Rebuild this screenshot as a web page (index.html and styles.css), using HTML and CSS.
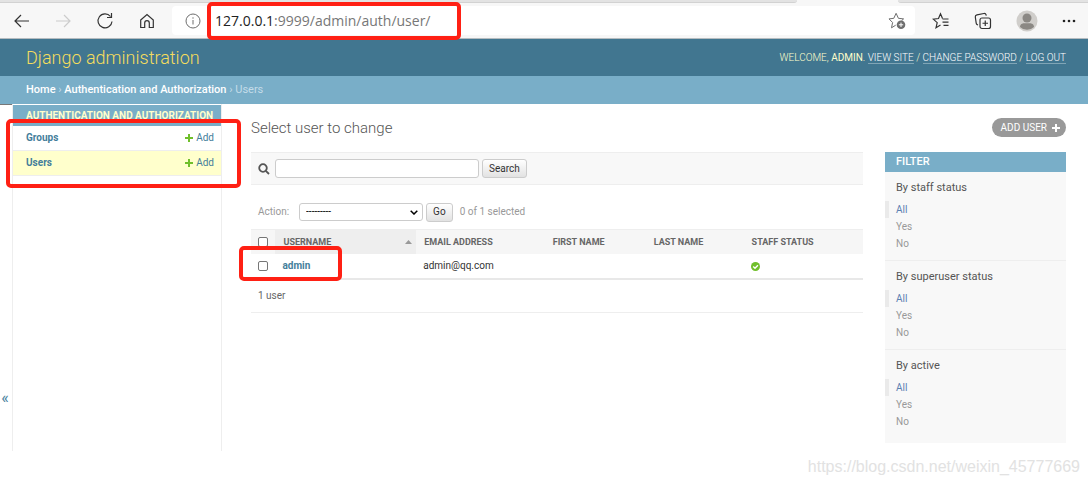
FILE: index.html
```html
<!DOCTYPE html>
<html lang="en">
<head>
<meta charset="utf-8">
<meta name="viewport" content="width=device-width, initial-scale=1">
<title>Select user to change | Django site admin</title>
<link rel="stylesheet" href="styles.css">
</head>
<body>
<div class="tabstrip"><span class="tab-rest tab-rest-left"></span><span class="tab-active"></span><span class="tab-rest tab-rest-right"></span></div>
<div class="toolbar">
  <button class="tool" aria-label="Back"><svg width="16" height="16" viewBox="0 0 16 16"><path d="M15 8H1M7 2L1 8l6 6"/></svg></button>
  <button class="tool tool-off" aria-label="Forward" disabled><svg width="16" height="16" viewBox="0 0 16 16"><path d="M1 8h14M9 2l6 6-6 6"/></svg></button>
  <button class="tool" aria-label="Refresh"><svg width="18" height="18" viewBox="0 0 18 18"><path d="M16 9.500A7 7 0 1 1 14.500 4.500M15.500 1v4.500H11"/></svg></button>
  <button class="tool" aria-label="Home"><svg width="16" height="16" viewBox="0 0 16 16"><path d="M1.700 7L8 1.500 14.300 7v7.500h-4V10a2.300 2.300 0 0 0-4.600 0v4.500h-4z"/></svg></button>
  <div class="address">
    <svg class="info" width="16" height="16" viewBox="0 0 16 16"><circle cx="8" cy="8" r="7"/><path d="M8 7v4.500M8 4.300v1.400"/></svg>
    <span class="url"><span class="host">127.0.0.1</span>:9999/admin/auth/user/</span>
    <button class="star" aria-label="Add to favorites"><svg width="18" height="18" viewBox="0 0 18 18"><path d="M10.400 6.300L15.600 6.900 13.600 8.600M7.700 13.200L3.500 15.800 4.600 10.500 1 6.900l4.800-.6L8.100 1.300l2.300 5"/><circle cx="13" cy="12.800" r="4.300" fill="#6e6e6e" stroke="none"/><path d="M13 10.600V15M10.800 12.800h4.400" stroke="#fff"/></svg></button>
  </div>
  <div class="actions">
    <button class="tool" aria-label="Favorites"><svg width="18" height="18" viewBox="0 0 18 18"><path d="M10.500 6.500L8.500 1.800l-2 4.700-5.300.6 4 3.500L4 15.700l4.500-2.600M10.500 7h6M10.500 10.200h6M11.500 13.400h5"/></svg></button>
    <button class="tool" aria-label="Collections"><svg width="18" height="18" viewBox="0 0 18 18"><rect x="6" y="6" width="10.500" height="10.500" rx="2"/><path d="M11.250 8.500v5.500M8.500 11.250H14M4 12.800l-.7-.2a2 2 0 0 1-1.100-1.500L1.300 5a2 2 0 0 1 1.600-2.200l7-1.300a2 2 0 0 1 2.200 1.400l.2.800"/></svg></button>
    <button class="tool" aria-label="Profile"><svg width="22" height="22" viewBox="0 0 22 22"><circle cx="11" cy="11" r="10.500" fill="#d0cecb" stroke="none"/><circle cx="11" cy="8" r="4.500" fill="#8b8884" stroke="none"/><path d="M4 17c0-3 2.500-3.800 4-3.800h6c1.500 0 4 .8 4 3.800a10 10 0 0 1-14 0z" fill="#8b8884" stroke="none"/></svg></button>
    <button class="tool" aria-label="Settings and more"><svg width="14" height="4" viewBox="0 0 14 4"><g fill="#222" stroke="none"><circle cx="2" cy="2" r="1.300"/><circle cx="7" cy="2" r="1.300"/><circle cx="12" cy="2" r="1.300"/></g></svg></button>
  </div>
</div>

<header class="header">
  <h1 class="branding"><a href="#">Django administration</a></h1>
  <div class="user-tools">Welcome, <strong>admin</strong>. <a href="#">View site</a> / <a href="#">Change password</a> / <a href="#">Log out</a></div>
</header>
<nav class="breadcrumbs"><a href="#">Home</a> › <a href="#">Authentication and Authorization</a> › Users</nav>

<div class="main">
  <button class="toggle" aria-label="Toggle navigation">«</button>
  <nav class="sidebar">
    <h2 class="app-name"><a href="#">Authentication and Authorization</a></h2>
    <div class="model"><a class="model-name" href="#">Groups</a><a class="add" href="#"><svg width="8" height="8" viewBox="0 0 8 8"><path d="M3 0h2v3h3v2H5v3H3V5H0V3h3z"/></svg>Add</a></div>
    <div class="model model-current"><a class="model-name" href="#">Users</a><a class="add" href="#"><svg width="8" height="8" viewBox="0 0 8 8"><path d="M3 0h2v3h3v2H5v3H3V5H0V3h3z"/></svg>Add</a></div>
  </nav>
  <main class="content">
    <div class="title-row">
      <h2 class="title">Select user to change</h2>
      <a class="add-user" href="#">Add user<svg width="8" height="8" viewBox="0 0 8 8"><path d="M3 0h2v3h3v2H5v3H3V5H0V3h3z"/></svg></a>
    </div>
    <div class="changelist">
      <div class="results-pane">
        <form class="search">
          <label for="searchbar"><svg width="12" height="12" viewBox="0 0 12 12"><circle cx="5" cy="5" r="3.800"/><path d="M7.800 7.800l3.200 3.200"/></svg></label>
          <input class="search-box" type="text" id="searchbar" aria-label="Search users">
          <button class="btn" type="button">Search</button>
        </form>
        <div class="bulk">
          <label for="action">Action:</label>
          <select id="action" class="select"><option>---------</option></select>
          <button class="btn" type="button">Go</button>
          <span class="counter">0 of 1 selected</span>
        </div>
        <table class="results">
          <colgroup><col class="c-check"><col class="c-user"><col class="c-mail"><col class="c-first"><col class="c-last"><col class="c-staff"></colgroup>
          <thead><tr>
            <th><input class="check" type="checkbox" aria-label="Select all"></th>
            <th class="sorted"><div class="sort-head">Username<svg width="7" height="4" viewBox="0 0 7 4"><path d="M0 4l3.500-4L7 4z"/></svg></div></th>
            <th>Email address</th><th>First name</th><th>Last name</th><th>Staff status</th>
          </tr></thead>
          <tbody><tr>
            <td><input class="check" type="checkbox" aria-label="Select admin"></td>
            <td><a class="user-link" href="#">admin</a></td>
            <td>admin@qq.com</td><td></td><td></td>
            <td><svg width="9" height="9" viewBox="0 0 9 9" role="img" aria-label="Yes"><circle cx="4.500" cy="4.500" r="4.500" fill="#70bf2b"/><path d="M2.200 4.500L4 6.200l2.900-3" fill="none" stroke="#fff" stroke-width="1.400"/></svg></td>
          </tr></tbody>
        </table>
        <p class="paginator">1 user</p>
      </div>
      <aside class="filter">
        <h2 class="filter-title">Filter</h2>
        <section class="group"><h3>By staff status</h3><ul><li class="selected"><a href="#">All</a></li><li><a href="#">Yes</a></li><li><a href="#">No</a></li></ul></section>
        <section class="group"><h3>By superuser status</h3><ul><li class="selected"><a href="#">All</a></li><li><a href="#">Yes</a></li><li><a href="#">No</a></li></ul></section>
        <section class="group"><h3>By active</h3><ul><li class="selected"><a href="#">All</a></li><li><a href="#">Yes</a></li><li><a href="#">No</a></li></ul></section>
      </aside>
    </div>
  </main>
</div>
<div class="mark mark-url"></div>
<div class="mark mark-models"></div>
<div class="mark mark-row"></div>
<div class="watermark">https://blog.csdn.net/weixin_45777669</div>
</body>
</html>
```
FILE: styles.css
```css
* { box-sizing: border-box; }
body { margin: 0; position: relative; min-height: 100vh; background: #fff; color: #333; font: 10px/14px Roboto, "Open Sans", sans-serif; }
a { color: #447e9b; text-decoration: none; }
h1, h2, h3, p, ul { margin: 0; padding: 0; font-weight: 400; }
ul { list-style: none; }
button { margin: 0; padding: 0; border: 0; background: none; font: inherit; color: inherit; }
svg { display: block; flex: none; }

.tabstrip { display: flex; height: 3px; background: #f7f7f7; }
.tab-rest { background: #e3e3e3; border-bottom: 1px solid #d2d2d2; }
.tab-rest-left { flex: 797; border-bottom-right-radius: 3px; }
.tab-active { flex: 101; }
.tab-rest-right { flex: 190; border-bottom-left-radius: 3px; }

.toolbar { display: flex; align-items: center; height: 36px; padding: 0 12px 0 14px; gap: 25px; background: #f7f7f7; border-bottom: 1px solid #b5bcc0; }
.tool svg, .star svg, .info { fill: none; stroke: #333; stroke-width: 1.2; }
.tool-off svg { stroke: #ccc; }
.address { flex: 1; display: flex; align-items: center; height: 29px; margin-left: -8px; padding: 0 9px 0 13px; gap: 14px; background: #fff; border-radius: 4px; }
.info, .star svg { stroke: #6e6e6e; stroke-width: 1; }
.url { flex: 1; font: 14px/20px "Open Sans", "Noto Sans", sans-serif; color: #777; }
.host { color: #222; }
.actions { display: flex; align-items: center; gap: 24px; margin-left: -8px; }

.header { display: flex; align-items: center; justify-content: space-between; height: 37px; padding: 0 22px 0 26px; background: #417690; color: #ffc; }
.branding { font-size: 18px; line-height: 24px; font-weight: 300; }
.branding a { color: #f5dd5d; }
.user-tools { font-size: 10px; font-weight: 300; text-transform: uppercase; }
.user-tools a { color: #fff; border-bottom: 1px solid #80a5b6; }
.breadcrumbs { height: 28px; padding: 7px 26px; background: #79aec8; color: #c4dce8; font-size: 11px; line-height: 14px; }
.breadcrumbs a { color: #fff; font-weight: 500; }

.main { display: flex; align-items: stretch; min-height: 347px; }
.toggle { width: 12px; flex: none; padding: 240px 2px 0 0; color: #447e9b; font-size: 16px; border-top: 1px solid #777; }
.sidebar { flex: none; width: 210px; padding-top: 1px; border: solid #eee; border-width: 0 1px; }
.app-name { height: 21px; padding: 4px 13px; background: #79aec8; font-size: 10px; line-height: 14px; font-weight: 700; text-transform: uppercase; white-space: nowrap; }
.app-name a { color: #ffc; }
.model { display: flex; align-items: center; justify-content: space-between; height: 25px; padding: 0 7px 0 13px; border-bottom: 1px solid #eee; }
.model-current { background: #ffc; }
.model-name { font-weight: 700; }
.add { display: flex; align-items: center; gap: 3px; }
.add svg { fill: #70bf2b; }

.content { flex: 1; padding: 13px 22px 8px 29px; }
.title-row { display: flex; align-items: center; justify-content: space-between; height: 21px; margin-bottom: 14px; }
.title { font-size: 15px; line-height: 20px; font-weight: 300; color: #555; }
.add-user { display: flex; align-items: center; gap: 5px; height: 19px; padding: 0 6px 0 9px; border-radius: 10px; background: #999; color: #fff; text-transform: uppercase; }
.add-user svg { fill: #fff; }
.changelist { display: flex; align-items: flex-start; gap: 22px; }
.results-pane { flex: 1; min-width: 0; }
.search { display: flex; align-items: center; height: 33px; padding: 0 7px; gap: 3px; background: #f8f8f8; border: solid #eee; border-width: 1px 0; }
.search label { margin-right: 2px; }
.search svg { fill: none; stroke: #555; stroke-width: 1.8; }
.search-box { width: 204px; height: 19px; border: 1px solid #ccc; border-radius: 3px; background: #fff; font: inherit; }
.btn { height: 19px; padding: 0 6px; border: 1px solid #ccc; border-radius: 3px; background: linear-gradient(#fff, #e2e2e2); color: #333; }
.bulk { display: flex; align-items: center; height: 44px; padding: 10px 7px 0; gap: 3px; color: #999; }
.select { appearance: none; width: 124px; height: 18px; margin-left: 7px; padding: 0 6px; border: 1px solid #ccc; border-radius: 3px; color: #000; font: inherit; background: #fff url("data:image/svg+xml,%3Csvg xmlns='http://www.w3.org/2000/svg' width='8' height='5'%3E%3Cpath d='M.7.7L4 4 7.300.7' fill='none' stroke='%23000' stroke-width='1.500'/%3E%3C/svg%3E") no-repeat right 4px center; }
.counter { margin-left: 4px; }
.results { width: 100%; border-collapse: separate; border-spacing: 0; table-layout: fixed; }
.c-check { width: 4%; }
.c-user { width: 23%; }
.c-mail { width: 21%; }
.c-first { width: 16.500%; }
.c-last { width: 16%; }
.results th { height: 25px; padding: 0 8px; background: #f6f6f6; border-top: 1px solid #eee; color: #666; font-size: 9px; font-weight: 700; text-align: left; text-transform: uppercase; }
.results .sorted { padding-right: 4px; background: #eee; }
.sort-head { display: flex; align-items: center; justify-content: space-between; }
.sort-head svg { fill: #999; }
.results td { height: 26px; padding: 0 7px; border-bottom: 2px solid #e8e8e8; }
.results th:first-child { padding: 0 7px; }
.check { display: block; appearance: none; width: 10px; height: 10px; margin: 0; border: 1px solid #767676; border-radius: 2px; background: #fff; }
.user-link { font-weight: 700; }
.paginator { height: 33px; padding: 9px 7px; border-bottom: 1px solid #eee; color: #666; }

.filter { flex: none; width: 181px; background: #f8f8f8; }
.filter-title { height: 20px; padding: 3px 11px; background: #79aec8; color: #fff; font-size: 11px; line-height: 14px; font-weight: 500; text-transform: uppercase; }
.group { padding: 9px 0 8px; border-bottom: 1px solid #eee; }
.group:last-child { padding-bottom: 13px; border: 0; }
.group h3 { padding: 0 11px; margin-bottom: 6px; color: #555; font-size: 11px; line-height: 14px; }
.group li { padding: 0 11px 0 7px; border-left: 4px solid transparent; line-height: 17px; }
.group li a { color: #999; }
.group .selected { border-left-color: #eaeaea; }
.group .selected a { color: #5b80b2; }

.mark { position: absolute; border: 4px solid #ff2014; border-radius: 5px; pointer-events: none; }
.mark-url { left: 207px; top: 2px; width: 254px; height: 38px; }
.mark-models { left: 6px; top: 119px; width: 235px; height: 69px; }
.mark-row { left: 239px; top: 246px; width: 103px; height: 35px; }
.watermark { position: absolute; right: 8px; bottom: 8px; color: #e2e2e2; font: 16px/20px "Liberation Sans", Arial, sans-serif; }
```
